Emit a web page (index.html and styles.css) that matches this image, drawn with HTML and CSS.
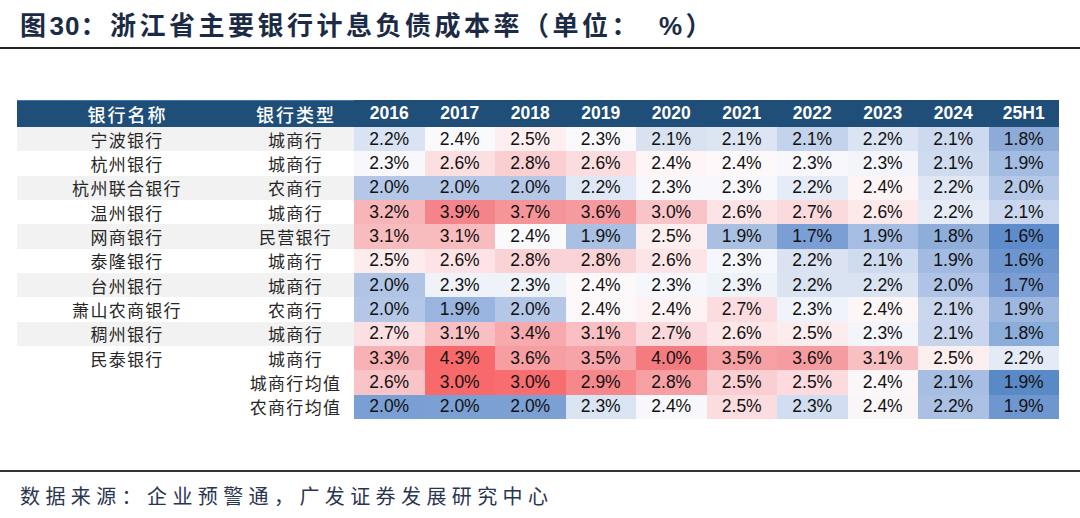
FILE: index.html
```html
<!DOCTYPE html>
<html lang="zh-CN">
<head>
<meta charset="utf-8">
<title>图30</title>
<link rel="stylesheet" href="styles.css">
</head>
<body>
<h1 class="title">图<span class="num">30</span>：浙江省主要银行计息负债成本率（单位：<span class="pct">%</span>）</h1>

<div class="sheet">
  <div class="h cn">银行名称</div><div class="h cn">银行类型</div>
  <div class="h">2016</div><div class="h">2017</div><div class="h">2018</div><div class="h">2019</div><div class="h">2020</div><div class="h">2021</div><div class="h">2022</div><div class="h">2023</div><div class="h">2024</div><div class="h">25H1</div>

  <div class="n g">宁波银行</div><div class="t g">城商行</div>
  <div class="v" style="background:#dae3f3">2.2%</div><div class="v" style="background:#fafafd">2.4%</div><div class="v" style="background:#fdeef0">2.5%</div><div class="v" style="background:#f9f9fc">2.3%</div><div class="v" style="background:#d9e2f1">2.1%</div><div class="v" style="background:#dde5f3">2.1%</div><div class="v" style="background:#c3d3ec">2.1%</div><div class="v" style="background:#dbe4f2">2.2%</div><div class="v" style="background:#ccd9ee">2.1%</div><div class="v" style="background:#8eabd8">1.8%</div>

  <div class="n">杭州银行</div><div class="t">城商行</div>
  <div class="v" style="background:#f8f8fc">2.3%</div><div class="v" style="background:#fbdfe1">2.6%</div><div class="v" style="background:#f9cfd2">2.8%</div><div class="v" style="background:#fbdde0">2.6%</div><div class="v" style="background:#fdf5f6">2.4%</div><div class="v" style="background:#fdf8f9">2.4%</div><div class="v" style="background:#f8f8fc">2.3%</div><div class="v" style="background:#f4f5fb">2.3%</div><div class="v" style="background:#cfdbef">2.1%</div><div class="v" style="background:#a3bce1">1.9%</div>

  <div class="n g">杭州联合银行</div><div class="t g">农商行</div>
  <div class="v" style="background:#b4c7e7">2.0%</div><div class="v" style="background:#b4c7e7">2.0%</div><div class="v" style="background:#b4c7e7">2.0%</div><div class="v" style="background:#e1e8f5">2.2%</div><div class="v" style="background:#f8f8fc">2.3%</div><div class="v" style="background:#f8f8fc">2.3%</div><div class="v" style="background:#e6ecf7">2.2%</div><div class="v" style="background:#fcf4f5">2.4%</div><div class="v" style="background:#e0e7f4">2.2%</div><div class="v" style="background:#b5c8e7">2.0%</div>

  <div class="n">温州银行</div><div class="t">城商行</div>
  <div class="v" style="background:#f7b5b8">3.2%</div><div class="v" style="background:#f48489">3.9%</div><div class="v" style="background:#f5959a">3.7%</div><div class="v" style="background:#f59ba0">3.6%</div><div class="v" style="background:#f9c4c7">3.0%</div><div class="v" style="background:#fce3e5">2.6%</div><div class="v" style="background:#fbdadd">2.7%</div><div class="v" style="background:#fde8ea">2.6%</div><div class="v" style="background:#e6ecf7">2.2%</div><div class="v" style="background:#c9d6ee">2.1%</div>

  <div class="n g">网商银行</div><div class="t g">民营银行</div>
  <div class="v" style="background:#f8bcbf">3.1%</div><div class="v" style="background:#f8bcbf">3.1%</div><div class="v" style="background:#faf9fc">2.4%</div><div class="v" style="background:#a9c0e3">1.9%</div><div class="v" style="background:#fdeff0">2.5%</div><div class="v" style="background:#a9c0e3">1.9%</div><div class="v" style="background:#7b9ed5">1.7%</div><div class="v" style="background:#a5bde2">1.9%</div><div class="v" style="background:#8fadd9">1.8%</div><div class="v" style="background:#5f8cca">1.6%</div>

  <div class="n">泰隆银行</div><div class="t">城商行</div>
  <div class="v" style="background:#fdecee">2.5%</div><div class="v" style="background:#fde3e5">2.6%</div><div class="v" style="background:#fad3d6">2.8%</div><div class="v" style="background:#fad3d6">2.8%</div><div class="v" style="background:#fde5e7">2.6%</div><div class="v" style="background:#f6f7fc">2.3%</div><div class="v" style="background:#dbe3f2">2.2%</div><div class="v" style="background:#cfdbef">2.1%</div><div class="v" style="background:#a3bbe1">1.9%</div><div class="v" style="background:#6d96cf">1.6%</div>

  <div class="n g">台州银行</div><div class="t g">城商行</div>
  <div class="v" style="background:#b0c4e6">2.0%</div><div class="v" style="background:#eff2f9">2.3%</div><div class="v" style="background:#eef2f9">2.3%</div><div class="v" style="background:#fdf8f9">2.4%</div><div class="v" style="background:#f6f7fc">2.3%</div><div class="v" style="background:#eef2f9">2.3%</div><div class="v" style="background:#dae3f2">2.2%</div><div class="v" style="background:#dae3f2">2.2%</div><div class="v" style="background:#aec3e5">2.0%</div><div class="v" style="background:#7a9dd4">1.7%</div>

  <div class="n">萧山农商银行</div><div class="t">农商行</div>
  <div class="v" style="background:#b4c7e7">2.0%</div><div class="v" style="background:#99b4de">1.9%</div><div class="v" style="background:#b4c7e7">2.0%</div><div class="v" style="background:#fcf8f9">2.4%</div><div class="v" style="background:#fdf3f4">2.4%</div><div class="v" style="background:#fcdcdf">2.7%</div><div class="v" style="background:#f0f3fa">2.3%</div><div class="v" style="background:#fdf6f7">2.4%</div><div class="v" style="background:#c9d6ee">2.1%</div><div class="v" style="background:#9db7df">1.9%</div>

  <div class="n g">稠州银行</div><div class="t g">城商行</div>
  <div class="v" style="background:#fcdfe2">2.7%</div><div class="v" style="background:#f9c0c3">3.1%</div><div class="v" style="background:#f7a9ad">3.4%</div><div class="v" style="background:#f9bfc2">3.1%</div><div class="v" style="background:#fbd8db">2.7%</div><div class="v" style="background:#fce6e8">2.6%</div><div class="v" style="background:#fdecee">2.5%</div><div class="v" style="background:#f4f5fb">2.3%</div><div class="v" style="background:#c8d5ed">2.1%</div><div class="v" style="background:#8badd9">1.8%</div>

  <div class="n">民泰银行</div><div class="t">城商行</div>
  <div class="v" style="background:#f8b1b4">3.3%</div><div class="v" style="background:#f8696b">4.3%</div><div class="v" style="background:#f69ea2">3.6%</div><div class="v" style="background:#f6a4a8">3.5%</div><div class="v" style="background:#f47c80">4.0%</div><div class="v" style="background:#f6a0a4">3.5%</div><div class="v" style="background:#f59ca0">3.6%</div><div class="v" style="background:#f9c0c3">3.1%</div><div class="v" style="background:#fdeef0">2.5%</div><div class="v" style="background:#e5ebf6">2.2%</div>

  <div class="n"></div><div class="t">城商行均值</div>
  <div class="v" style="background:#f9c4c7">2.6%</div><div class="v" style="background:#f8696b">3.0%</div><div class="v" style="background:#f86d70">3.0%</div><div class="v" style="background:#f6878b">2.9%</div><div class="v" style="background:#f7a0a4">2.8%</div><div class="v" style="background:#fbcfd2">2.5%</div><div class="v" style="background:#fcdadd">2.5%</div><div class="v" style="background:#fbf6f8">2.4%</div><div class="v" style="background:#a6bee2">2.1%</div><div class="v" style="background:#5a8ac6">1.9%</div>

  <div class="n"></div><div class="t">农商行均值</div>
  <div class="v" style="background:#7a9fd4">2.0%</div><div class="v" style="background:#7ba0d4">2.0%</div><div class="v" style="background:#7ca0d4">2.0%</div><div class="v" style="background:#dbe4f2">2.3%</div><div class="v" style="background:#f8f8fc">2.4%</div><div class="v" style="background:#fbdde0">2.5%</div><div class="v" style="background:#d1ddf0">2.3%</div><div class="v" style="background:#faf5f7">2.4%</div><div class="v" style="background:#aac1e3">2.2%</div><div class="v" style="background:#6e97cf">1.9%</div>
</div>

<p class="source">数据来源：企业预警通，广发证券发展研究中心</p>
</body>
</html>
```

FILE: styles.css
```css
* {
  box-sizing: border-box;
  margin: 0;
  padding: 0;
}

html, body {
  background: #ffffff;
}

body {
  width: 1080px;
  height: 518px;
  overflow: hidden;
  font-family: "Noto Sans CJK SC", "Liberation Sans", sans-serif;
}

.title {
  height: 49px;
  padding: 11px 0 0 20px;
  border-bottom: 2px solid #222222;
  color: #1c2b45;
  font-size: 26px;
  font-weight: 700;
  line-height: 26px;
  letter-spacing: 3.5px;
  white-space: nowrap;
}

.title .num {
  font-family: "Liberation Sans", sans-serif;
  letter-spacing: 1px;
}

.title .pct {
  font-family: "Liberation Sans", sans-serif;
  margin-left: 18px;
}

.sheet {
  margin: 51px 0 0 17px;
  width: 1042px;
  display: grid;
  grid-template-columns: 219px 118px repeat(10, 1fr);
  grid-template-rows: 27px repeat(12, 24.33px);
}

.h {
  display: flex;
  align-items: center;
  justify-content: center;
  background: #1f4e79;
  color: #ffffff;
  font-family: "Liberation Sans", sans-serif;
  font-weight: 700;
  font-size: 17.5px;
}

.h.cn {
  font-family: "Noto Sans CJK SC", sans-serif;
  font-weight: 500;
  font-size: 18px;
  letter-spacing: 2px;
  padding-left: 2px;
  border-top: 1px solid #3a78b8;
}

.n, .t {
  display: flex;
  align-items: center;
  justify-content: center;
  color: #262626;
  font-size: 17px;
  letter-spacing: 1.3px;
  padding-left: 1px;
}

.g {
  background: #f2f2f2;
}

.v {
  display: flex;
  align-items: center;
  justify-content: center;
  font-family: "Liberation Sans", sans-serif;
  font-size: 17.5px;
  color: #111111;
}

.source {
  margin-top: 51px;
  border-top: 2px solid #333333;
  padding: 9px 0 0 20px;
  color: #2a3550;
  font-size: 20px;
  letter-spacing: 5.4px;
  white-space: nowrap;
}
```
